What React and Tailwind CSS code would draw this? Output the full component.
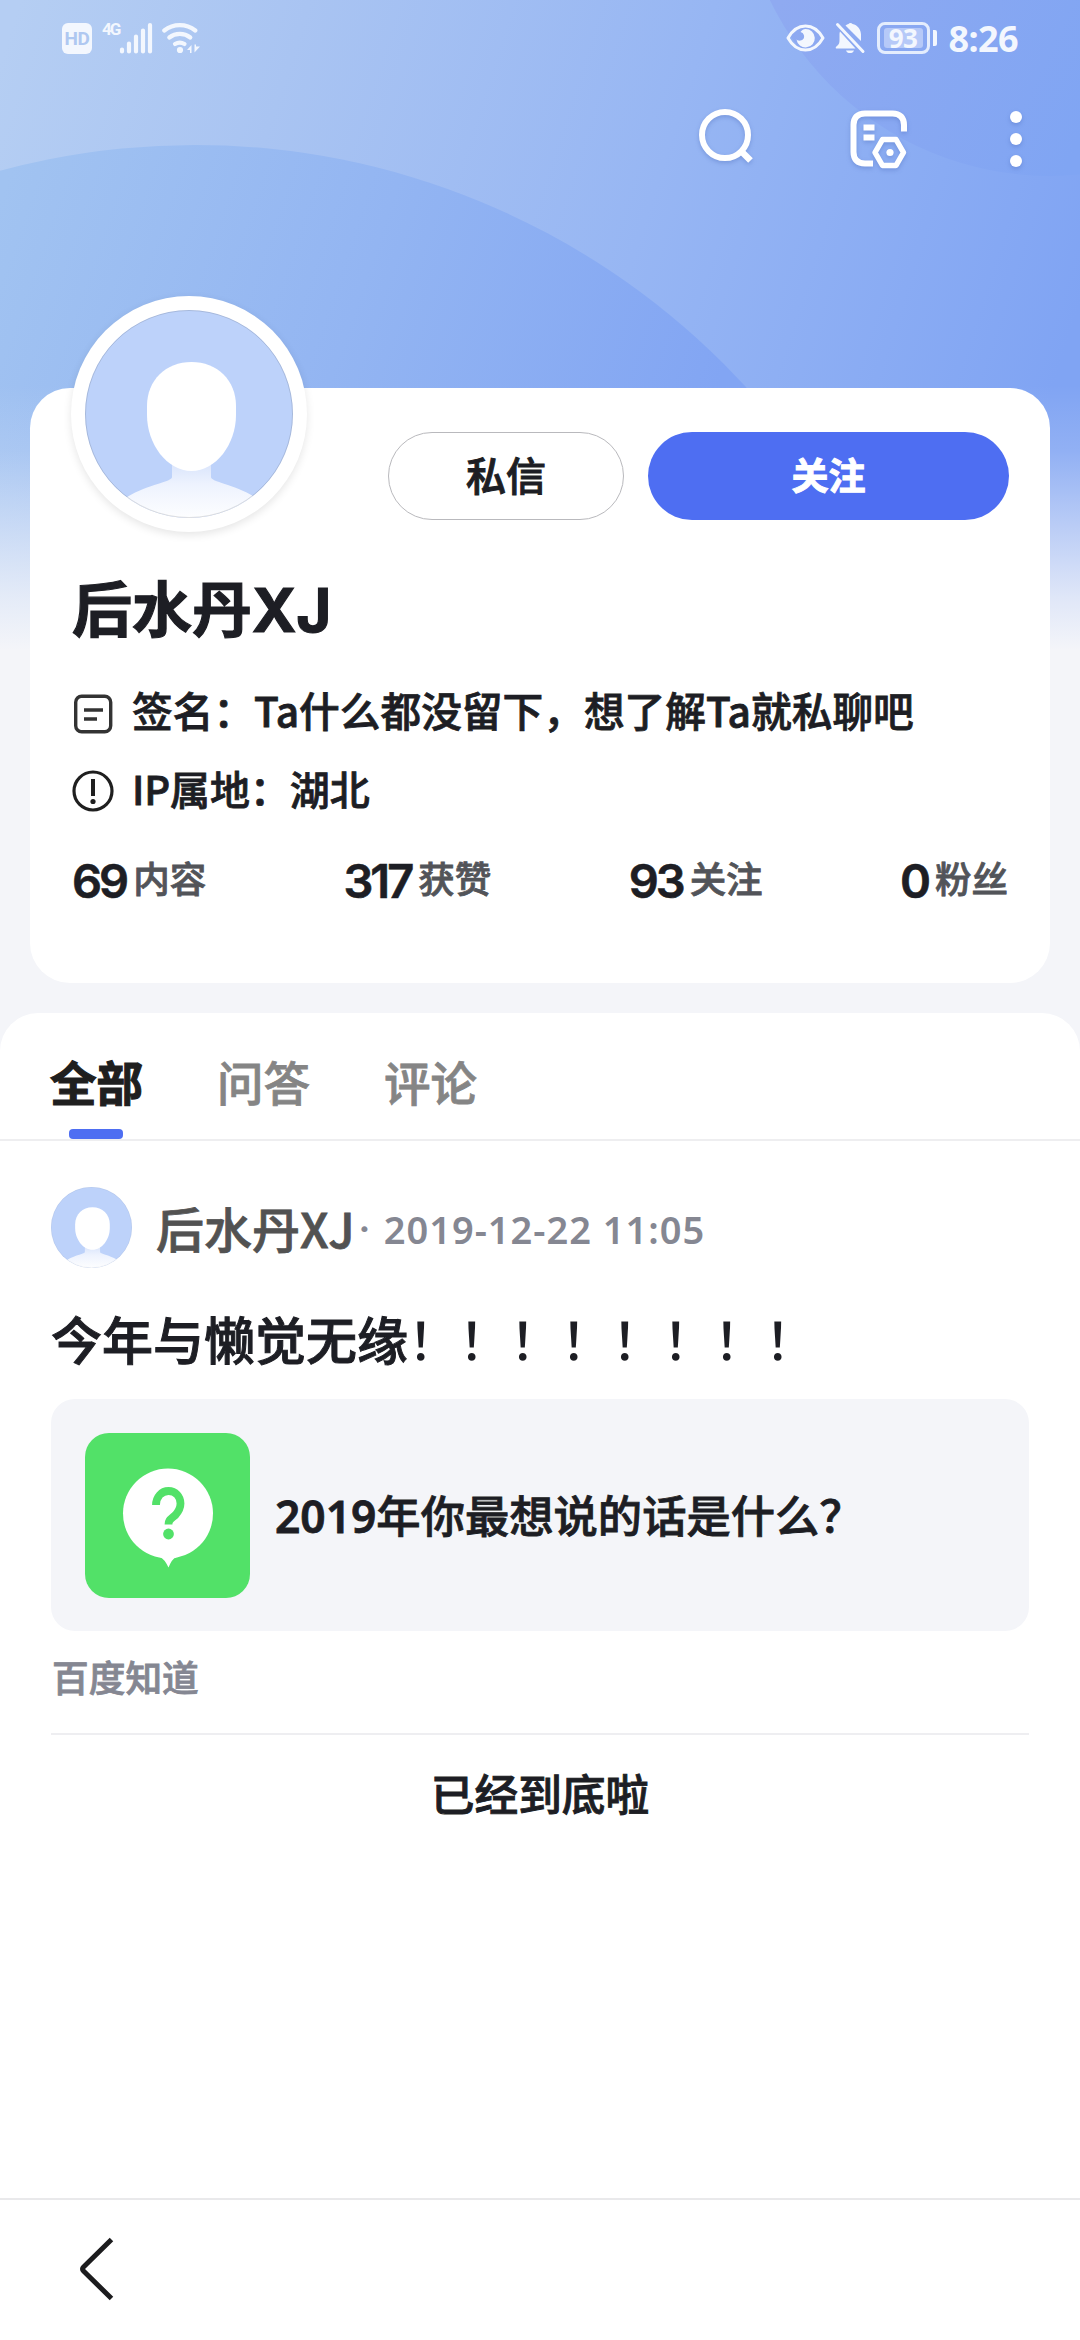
const STATS = [
  { value: '69', label: '内容' },
  { value: '317', label: '获赞' },
  { value: '93', label: '关注' },
  { value: '0', label: '粉丝' },
]

const TABS = ['全部', '问答', '评论']

// Blue cover behind the status bar and the profile card. It fades into the
// page colour below y = 388.
function Cover() {
  return (
    <svg className="absolute top-0 left-0 h-[650px] w-[1080px]" viewBox="0 0 1080 650">
      <defs>
        <linearGradient id="sky" gradientUnits="userSpaceOnUse" x1="0" y1="60" x2="1050" y2="400">
          <stop offset="0" stopColor="#b5cef3" />
          <stop offset="0.25" stopColor="#a9c4f2" />
          <stop offset="0.6" stopColor="#97b6f3" />
          <stop offset="1" stopColor="#80a4f3" />
        </linearGradient>
        <linearGradient id="hill" gradientUnits="userSpaceOnUse" x1="0" y1="200" x2="700" y2="440">
          <stop offset="0" stopColor="#a1c3f1" />
          <stop offset="0.5" stopColor="#93b5f2" />
          <stop offset="1" stopColor="#82a5f3" />
        </linearGradient>
        <linearGradient id="moon" gradientUnits="userSpaceOnUse" x1="780" y1="0" x2="1080" y2="140">
          <stop offset="0" stopColor="#8faaf1" />
          <stop offset="1" stopColor="#80a5f3" />
        </linearGradient>
        <linearGradient id="fade" x1="0" y1="0" x2="0" y2="1">
          <stop offset="0" stopColor="#f4f5f9" stopOpacity="0" />
          <stop offset="0.25" stopColor="#f4f5f9" stopOpacity="0.15" />
          <stop offset="0.5" stopColor="#f4f5f9" stopOpacity="0.46" />
          <stop offset="0.8" stopColor="#f4f5f9" stopOpacity="0.82" />
          <stop offset="1" stopColor="#f4f5f9" />
        </linearGradient>
      </defs>
      <rect width="1080" height="650" fill="url(#sky)" />
      <circle cx="1050" cy="-135" r="311" fill="url(#moon)" />
      <circle cx="195" cy="893" r="748" fill="url(#hill)" />
      <rect y="385" width="1080" height="265" fill="url(#fade)" />
    </svg>
  )
}

function StatusBar() {
  return (
    <div className="flex h-[76px] items-center justify-between pr-[62px] pl-[62px] text-[#f3f7fe]">
      <div className="flex items-center">
        <div className="flex h-[31px] w-[30px] items-center justify-center rounded-[6px] bg-[#f3f7fe] font-['Roboto',sans-serif] text-[19px] leading-none font-bold tracking-[-0.5px] text-[#afc8f1]">
          HD
        </div>
        <span className="mb-[18px] ml-[10px] w-[17px] font-['Roboto',sans-serif] text-[17px] leading-none font-bold tracking-[-2px]">
          4G
        </span>
        <svg className="h-[32px] w-[34px]" viewBox="0 0 34 32" stroke="currentColor" strokeWidth="4.200" strokeLinecap="round">
          <path d="M3 27.500v2M10 21.500v8M17 14.500v15M24 8.500v21M31 3v26.500" />
        </svg>
        <svg className="ml-[9px] h-[32px] w-[39px]" viewBox="0 0 39 32" fill="none" stroke="currentColor" strokeWidth="4.200" strokeLinecap="round">
          <path d="M2.300 8.500a25 25 0 0 1 31 0" />
          <path d="M7.300 15.500a17 17 0 0 1 21 0" />
          <path d="M13 22a9 9 0 0 1 9.500 0" />
          <circle cx="18" cy="28" r="3.100" fill="currentColor" stroke="none" />
          <path d="M29.500 31v-8l-4.500 5h3v3zM32.500 22.500v8l5.500-6h-4v-2z" fill="currentColor" stroke="none" />
        </svg>
      </div>

      <div className="flex items-center">
        <svg className="h-[28px] w-[39px]" viewBox="0 0 39 28" fill="none">
          <path d="M2 14C6.500 6 12.500 2 19.500 2S32.500 6 37 14C32.500 22 26.500 26 19.500 26S6.500 22 2 14z" stroke="currentColor" strokeWidth="3" strokeLinejoin="round" />
          <path d="M19.500 5a9.200 9.200 0 1 1-9 10.500c2.500 2.500 8.500 1 7.500-4-.4-2-2-3.200-3.500-3.500 1.500-2 3-3 5-3z" fill="currentColor" />
        </svg>
        <svg className="ml-[10px] h-[32px] w-[31px]" viewBox="0 0 31 32" fill="currentColor">
          <path d="M10.500 3.500c1-.8 2.200-1.300 3-1.500.8-1.300 3-1.300 4 0 5 1 8.500 5.500 8.500 10.500v6.500z" />
          <path d="M5 9.500 20.500 26.500H1c-.7-1 0-1.800 1-2.500 2-1.500 2.500-3 2.500-6V12c0-1 .2-1.800.5-2.500zM11 28.500h8c-.8 3.400-7.200 3.400-8 0z" />
          <path d="M2.500 2.500 28 29.500" stroke="currentColor" strokeWidth="3" strokeLinecap="round" />
        </svg>
        <div className="ml-[11px] flex h-[32px] w-[53px] items-center justify-center rounded-[8px] border-[3px] border-[#e4edfd]">
          <span className="flex h-[20px] w-[39px] items-center justify-center rounded-[3px] bg-[#b6c9f8] font-['Noto_Sans',sans-serif] text-[26px] leading-none font-bold tracking-[-0.5px]">
            93
          </span>
        </div>
        <span className="ml-[3px] h-[16px] w-[4px] rounded-r-[2px] bg-current" />
        <span className="mt-[2px] ml-[12px] font-['Noto_Sans',sans-serif] text-[36px] leading-none font-bold tracking-[-0.6px]">
          8:26
        </span>
      </div>
    </div>
  )
}

function CoverActions() {
  return (
    <div className="flex h-[126px] items-center justify-end pr-[58px] text-white">
      <svg className="h-[60px] w-[60px] drop-shadow-[0_2px_2px_rgba(70,100,180,0.35)]" viewBox="0 0 60 60" fill="none" stroke="currentColor" strokeWidth="6">
        <circle cx="27" cy="26" r="23" />
        <path d="M43 42l9.500 9.500" strokeWidth="6.500" />
      </svg>
      <svg className="ml-[91px] h-[60px] w-[60px] drop-shadow-[0_2px_2px_rgba(70,100,180,0.35)]" viewBox="0 0 60 60" fill="none" stroke="currentColor" strokeWidth="6">
        <path d="M24 54.500H16C8.500 54.500 4.500 50.500 4.500 43V16C4.500 8.500 8.500 4.500 16 4.500h27.500C51 4.500 55 8.500 55 16v6.500" />
        <path d="M14.500 18.500h11M14.500 28.500h11" />
        <path d="M33.500 30.500h13.500l7.500 13-7.500 13H33.500l-7.500-13z" strokeWidth="5.500" strokeLinejoin="round" />
        <circle cx="41" cy="43.500" r="3.600" fill="currentColor" stroke="none" />
      </svg>
      <div className="ml-[101px] flex flex-col gap-[10px] drop-shadow-[0_2px_2px_rgba(70,100,180,0.35)]">
        <i className="size-[12px] rounded-full bg-white" />
        <i className="size-[12px] rounded-full bg-white" />
        <i className="size-[12px] rounded-full bg-white" />
      </div>
    </div>
  )
}

function Avatar({ id, className }) {
  return (
    <svg className={className} viewBox="0 0 208 208">
      <defs>
        <clipPath id={`${id}-clip`}>
          <circle cx="104" cy="104" r="104" />
        </clipPath>
        <linearGradient id={`${id}-body`} x1="0" y1="0" x2="0" y2="1">
          <stop offset="0" stopColor="#d6e2fb" />
          <stop offset="0.4" stopColor="#eef3fe" />
          <stop offset="1" stopColor="#fff" />
        </linearGradient>
      </defs>
      <g clipPath={`url(#${id}-clip)`}>
        <rect width="208" height="208" fill="#bdd2fa" />
        <path d="M87 150h39v17c0 5 22 7 44 20l20 25H20l22-25c22-13 45-15 45-20z" fill={`url(#${id}-body)`} />
        <path d="M106.500 52C132 52 151 70 151 96v9c0 29-20 56-44.500 56S62 134 62 105V96c0-26 19-44 44.500-44z" fill="#fff" />
      </g>
      <circle cx="104" cy="104" r="103.500" fill="none" stroke="#000" strokeOpacity="0.12" />
    </svg>
  )
}

function ProfileCard() {
  return (
    <section className="mx-[30px] mt-[186px] flex h-[595px] flex-col rounded-[40px] bg-white px-[42px] text-[#1d1e24]">
      <div className="flex h-[145px]">
        <div className="mt-[-92px] ml-[-1px] flex size-[236px] shrink-0 items-center justify-center rounded-full bg-white shadow-[0_3px_8px_rgba(0,0,0,0.1)]">
          <Avatar id="big" className="size-[208px]" />
        </div>
        <button className="mt-[44px] ml-[81px] h-[88px] w-[236px] shrink-0 rounded-full border border-[#b9b9bd] pb-[5px] text-[40px] leading-none font-medium [-webkit-text-stroke:1px]">
          私信
        </button>
        <button className="mt-[44px] ml-[24px] h-[88px] w-[361px] shrink-0 rounded-full bg-[#4e6ef2] pb-[3px] text-[37px] leading-none font-bold text-white [-webkit-text-stroke:1px]">
          关注
        </button>
      </div>

      <h1 className="mt-[38px] text-[60px] leading-[70px] font-bold whitespace-nowrap [-webkit-text-stroke:1.2px]">
        后水丹<span className="font-['Inter',sans-serif] text-[60px]">XJ</span>
      </h1>

      <div className="mt-[39px] flex h-[60px] items-center">
        <svg className="mr-[18px] h-[42px] w-[42px]" viewBox="0 0 42 42" fill="none" stroke="#333" strokeWidth="3.400">
          <rect x="3.700" y="3.200" width="35" height="35.500" rx="6" />
          <path d="M12 17h19M12 26h13" />
        </svg>
        <p className="mb-[7px] text-[40.700px] leading-none font-medium whitespace-nowrap [-webkit-text-stroke:0.8px]">
          签名：Ta什么都没留下，想了解Ta就私聊吧
        </p>
      </div>
      <div className="mt-[17px] flex h-[60px] items-center">
        <svg className="mr-[18px] h-[42px] w-[42px]" viewBox="0 0 42 42" fill="none" stroke="#1f1f1f" strokeWidth="3.200">
          <circle cx="21" cy="21" r="19" />
          <path d="M21 9v17" strokeWidth="4" />
          <circle cx="21" cy="31.500" r="2.600" fill="#1f1f1f" stroke="none" />
        </svg>
        <p className="mb-[7px] text-[40px] leading-none font-medium tracking-[-0.1px] whitespace-nowrap [-webkit-text-stroke:0.8px]">
          IP属地：湖北
        </p>
      </div>

      <div className="mt-[29px] flex h-[60px] items-center justify-between">
        {STATS.map((s) => (
          <div key={s.label} className="flex items-center">
            <span className="font-['Inter',sans-serif] text-[47px] leading-none font-semibold tracking-[-3px] [-webkit-text-stroke:0.6px]">
              {s.value}
            </span>
            <span className="mb-[3px] ml-[7px] text-[36.500px] leading-none font-medium text-[#525459] [-webkit-text-stroke:0.8px]">
              {s.label}
            </span>
          </div>
        ))}
      </div>
    </section>
  )
}

function TabBar() {
  return (
    <nav className="flex h-[128px] gap-[74px] border-b-2 border-[#eeeef0] pl-[50px]">
      {TABS.map((t, i) => (
        <div key={t} className="flex w-[93px] flex-col items-center">
          <span
            className={
              i === 0
                ? 'mt-[43px] text-[46.500px] leading-[50px] font-bold text-[#1f1f1f] [-webkit-text-stroke:1.2px]'
                : 'mt-[43px] text-[46.500px] leading-[50px] font-medium text-[#858585] [-webkit-text-stroke:0.8px]'
            }
          >
            {t}
          </span>
          {i === 0 && <span className="mt-[23px] mr-[1px] h-[10px] w-[54px] rounded-[4px] bg-[#4e6ef2]" />}
        </div>
      ))}
    </nav>
  )
}

function Post() {
  return (
    <article className="mx-[51px] flex flex-col border-b-2 border-[#eeeef1]">
      <header className="mt-[44px] flex h-[84px] items-center">
        <Avatar id="small" className="size-[81px]" />
        <span className="ml-[24px] text-[48px] leading-none font-medium text-[#525252] [-webkit-text-stroke:0.8px]">后水丹XJ</span>
        <span className="mt-[4px] ml-[4px] w-[10px] font-['Roboto',sans-serif] text-[38px] leading-none font-bold text-[#858792]">·</span>
        <time className="mt-[3px] ml-[15px] font-['Noto_Sans',sans-serif] text-[38px] leading-none font-semibold tracking-[1px] whitespace-nowrap text-[#858792]">
          2019-12-22 11:05
        </time>
      </header>
      <p className="mt-[36px] text-[51px] leading-[66px] font-medium whitespace-nowrap text-[#1d1e24] [-webkit-text-stroke:1px]">
        今年与懒觉无缘<span className="[-webkit-text-stroke:0]">！！！！！！！！</span>
      </p>
      <div className="mt-[28px] flex h-[232px] items-center rounded-[24px] bg-[#f4f5f9] pl-[34px]">
        <svg className="size-[165px]" viewBox="0 0 165 165">
          <rect width="165" height="165" rx="24" fill="#52e168" />
          <circle cx="83" cy="80.500" r="45" fill="#fff" />
          <path d="M75 124h16q-4 2-7.500 10.500-4-8.500-8.500-10.500z" fill="#fff" />
          <path d="M71 72c0-8 5.500-14 12.500-14S95.500 63.500 95.500 70.500c0 5-2 8-5 11.500-5 4.500-7 5-7 9.500" fill="none" stroke="#52e168" strokeWidth="7.800" />
          <circle cx="83.500" cy="101" r="5.400" fill="#52e168" />
        </svg>
        <span className="ml-[25px] text-[44.300px] leading-none font-medium whitespace-nowrap text-[#1d1e24] [-webkit-text-stroke:0.8px]">
          <span className="font-['Noto_Sans',sans-serif] font-semibold">2019</span>年你最想说的话是什么？
        </span>
      </div>
      <span className="mt-[22px] mb-[34px] ml-[1px] text-[36.700px] leading-[46px] font-medium text-[#858792] [-webkit-text-stroke:0.8px]">
        百度知道
      </span>
    </article>
  )
}

export default function App() {
  return (
    <div className="relative flex h-[2340px] w-[1080px] flex-col overflow-hidden bg-[#f4f5f9] font-['Noto_Sans_CJK_SC',sans-serif]">
      <Cover />
      <div className="relative flex flex-col">
        <StatusBar />
        <CoverActions />
        <ProfileCard />
      </div>
      <main className="relative mt-[30px] flex flex-1 flex-col rounded-t-[38px] bg-white">
        <TabBar />
        <Post />
        <p className="mt-[29px] text-center text-[43.700px] leading-[56px] font-medium text-[#1d1e24] [-webkit-text-stroke:0.9px]">
          已经到底啦
        </p>
      </main>
      <footer className="relative flex h-[142px] items-center border-t-2 border-[#e9e9eb] bg-white pl-[76px]">
        <svg className="mb-[2px] h-[66px] w-[40px]" viewBox="0 0 40 66" fill="none" stroke="#1c1c1e" strokeWidth="5">
          <path d="M35.500 3.500 7.500 31q-2 2 0 4L35.500 62.500" />
        </svg>
      </footer>
    </div>
  )
}
